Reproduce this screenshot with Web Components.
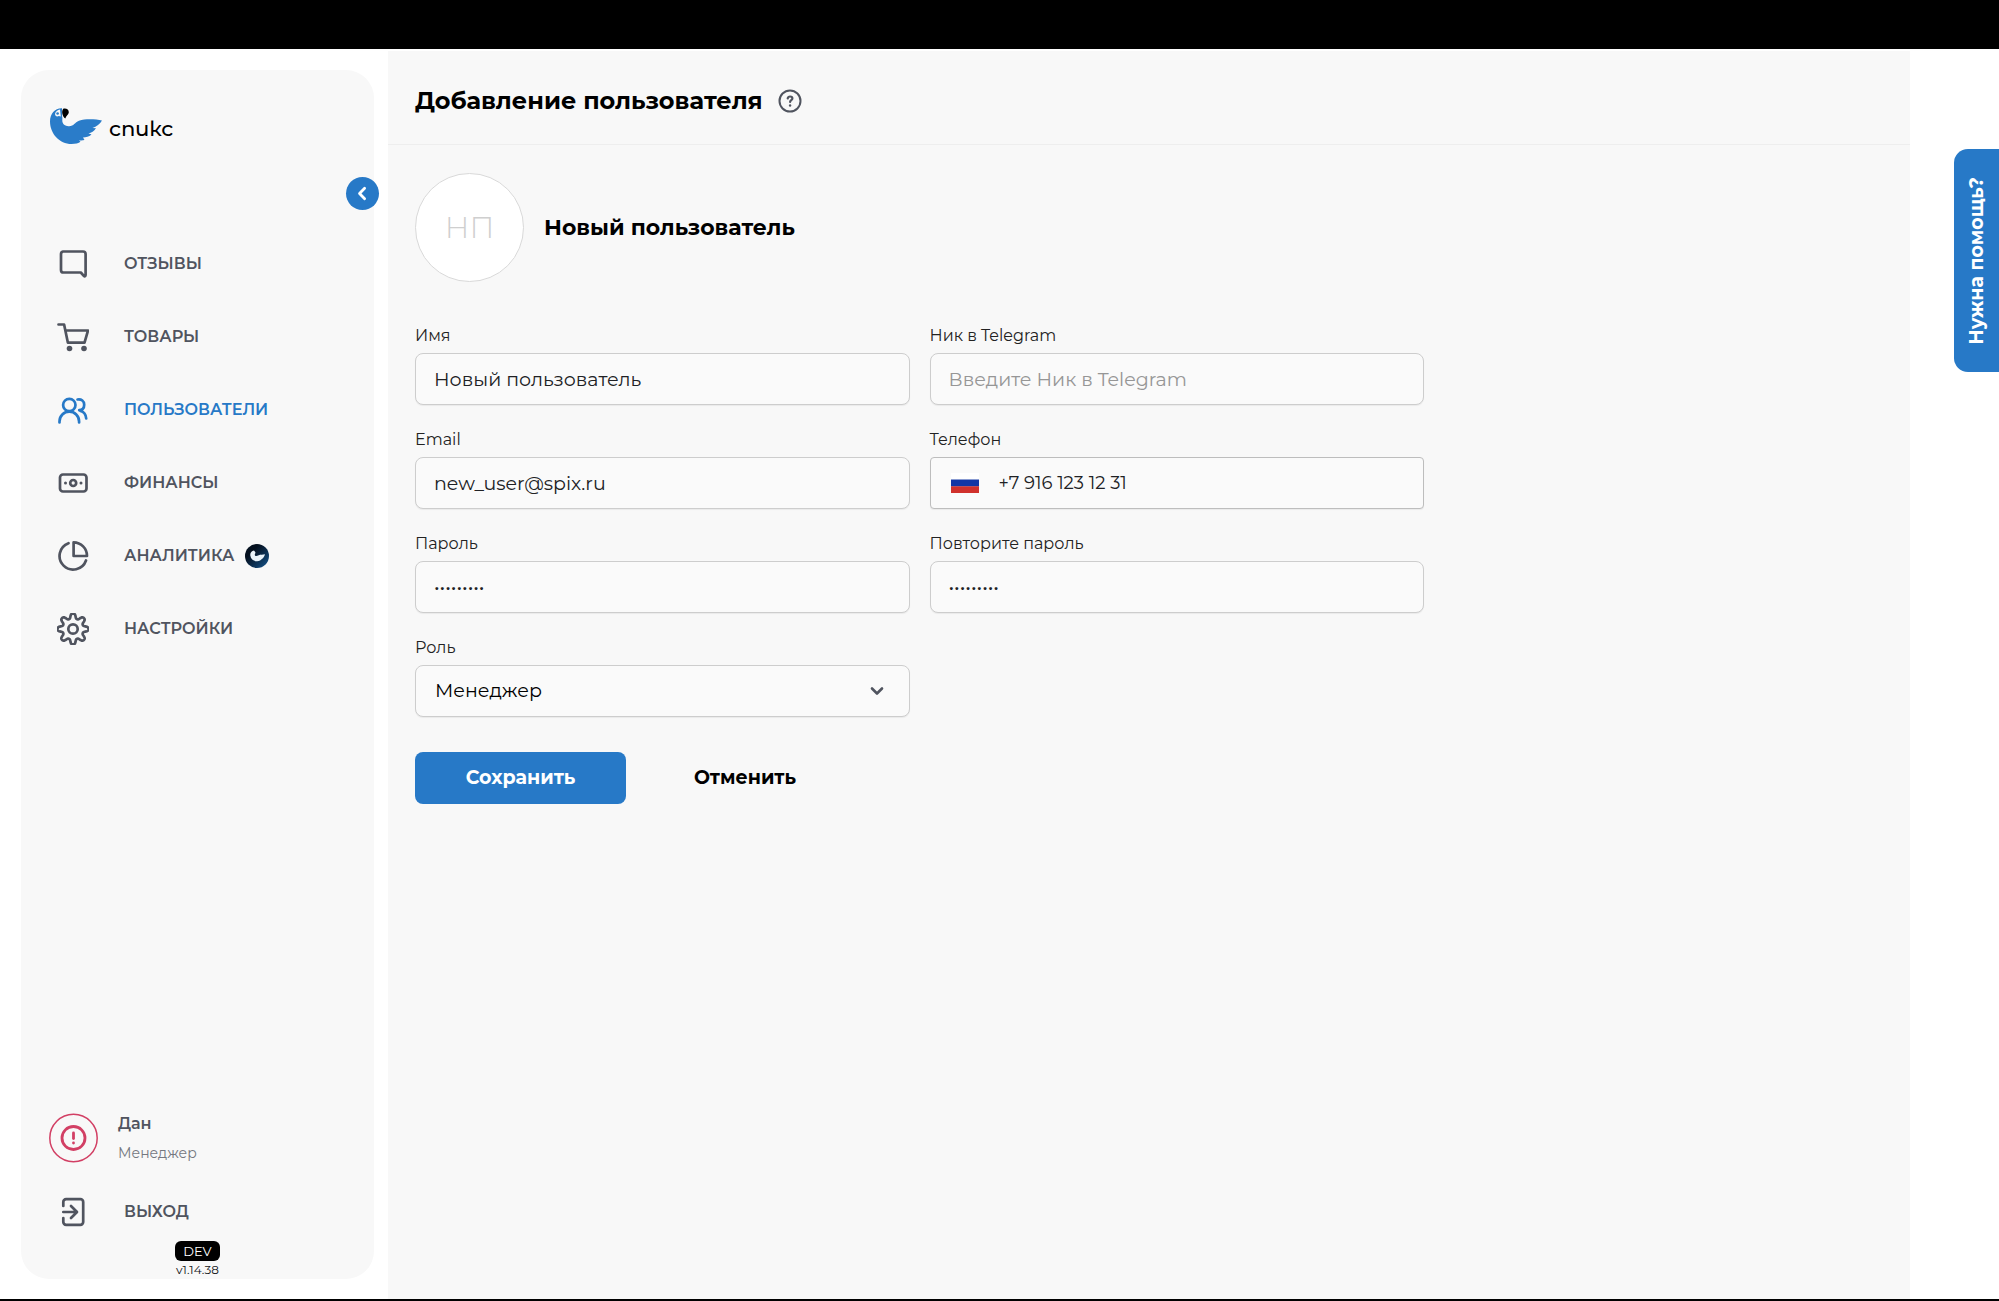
<!DOCTYPE html>
<html lang="ru">
<head>
<meta charset="utf-8">
<meta name="viewport" content="width=device-width, initial-scale=1">
<title>Добавление пользователя</title>
<style>
  :root {
    --blue: #2779c7;
    --ink: #111214;
    --grey: #50545f;
    --panel: #f8f8f8;
    --line: #cdcdcd;
  }
  body {
    margin: 0;
    font-family: Montserrat, Inter, "Noto Sans", sans-serif;
    color: var(--ink);
    background: #fff;
  }
</style>
</head>
<body>
<app-shell>
  <side-bar slot="side">
    <nav-item icon="reviews">ОТЗЫВЫ</nav-item>
    <nav-item icon="cart">ТОВАРЫ</nav-item>
    <nav-item icon="users" active>ПОЛЬЗОВАТЕЛИ</nav-item>
    <nav-item icon="money">ФИНАНСЫ</nav-item>
    <nav-item icon="pie">АНАЛИТИКА<bird-badge slot="after"></bird-badge></nav-item>
    <nav-item icon="gear">НАСТРОЙКИ</nav-item>
    <user-card slot="bottom" name="Дан" role-name="Менеджер"></user-card>
    <nav-item slot="bottom" icon="exit" compact>ВЫХОД</nav-item>
    <version-tag slot="bottom" stage="DEV">v1.14.38</version-tag>
  </side-bar>
  <page-header>Добавление пользователя</page-header>
  <user-form></user-form>
</app-shell>
<help-tab>Нужна помощь?</help-tab>

<script>
const gearPath = (() => {
  const points = [];
  for (let i = 0; i < 240; i++) {
    const a = i / 240 * Math.PI * 2;
    const r = 13 + 2.4 * Math.tanh(1.4 * Math.cos(8 * a)) / Math.tanh(1.4);
    points.push((16 + r * Math.sin(a)).toFixed(2) + ' ' + (16 - r * Math.cos(a)).toFixed(2));
  }
  return 'M' + points.join('L') + 'Z';
})();

const icons = {
  reviews: '<path d="M6 3.500h20a2.600 2.600 0 0 1 2.600 2.600v21c0 1.400-1 1.600-1.800.8l-3-3.400H6.500A2.600 2.600 0 0 1 4 21.900V6.100A2.600 2.600 0 0 1 6 3.500z"/>',
  cart: '<path d="M1.500 3.500h5.600l3.800 18.200H27.500L31 9.500H8.500"/><g fill="currentColor" stroke="none"><circle cx="12.500" cy="27.500" r="2.800"/><circle cx="27" cy="27.500" r="2.800"/></g>',
  users: '<circle cx="12.300" cy="11" r="6.200"/><path d="M2.500 28.500v-1a9.800 9.800 0 0 1 19.600 0v1M20.500 5.500c4-.6 6.700 1.500 6.700 5.200 0 3-1.800 5.200-5 5.500M23.500 17c3.300.8 5.400 3.500 5.700 7.500"/>',
  money: '<rect x="3" y="7.500" width="26.500" height="17" rx="3"/><circle cx="16.200" cy="16" r="3"/><g fill="currentColor" stroke="none"><circle cx="8.500" cy="16" r="1.500"/><circle cx="24" cy="16" r="1.500"/></g>',
  pie: '<path d="M11.500 3.200A13.600 13.600 0 1 0 29 20.500M16.600 2.400A13.500 13.500 0 0 1 30 16H16.600z"/>',
  gear: '<circle cx="16" cy="16" r="4.700"/><path d="' + gearPath + '"/>',
  exit: '<path d="M6.300 10V6a2.800 2.800 0 0 1 2.800-2.800h14.300A2.800 2.800 0 0 1 26.200 6v20a2.800 2.800 0 0 1-2.800 2.800H9.100A2.800 2.800 0 0 1 6.300 26v-4M6.300 16h13M14 10l6 6-6 6"/>'
};
const icon = name => `<svg width="32" height="32" viewBox="0 0 32 32" fill="none" stroke="currentColor" stroke-width="2.700" stroke-linecap="round" stroke-linejoin="round" aria-hidden="true">${icons[name]}</svg>`;

const birdBody = 'M12 .3C5 0 0 6 0 13.500 0 25.500 9.500 36 21.500 36c4 0 7-.8 9-2.200l-1.500-1.500c2 .3 4 .2 5.500-.3l-1.500-2.500c3 0 6-.8 8.500-3l-3-1.200c3-.5 5.500-2 7.500-5l-3.500-.3c4-1.500 7.500-3.800 9.500-7.500-6-1.200-16-2-23 .2-4.500 1.500-5 5.800-10.500 5.500C15 18 12.500 16 12.300 13c0-2 .3-3-.3-5z';

const base = '<style>*{box-sizing:border-box}button,input,select{font-family:inherit;color:inherit;margin:0}svg{display:block;flex:none}</style>';
function define(name, render) {
  customElements.define(name, class extends HTMLElement {
    constructor() { super(); this.attachShadow({ mode: 'open' }); }
    connectedCallback() { this.shadowRoot.innerHTML = base + render(this); }
  });
}

define('app-shell', () => `
<style>
  :host { display: flex; flex-direction: column; min-height: 100vh; border-top: 49px solid #000; border-bottom: 2px solid #000; box-sizing: border-box; }
  .row { flex: 1; display: flex; padding-right: 89px; gap: 14px; }
  aside { display: flex; flex: none; width: 374px; padding: 21px 0 20px 21px; }
  main { flex: 1; min-width: 0; margin-top: 2px; background: var(--panel); }
</style>
<div class="row">
  <aside><slot name="side"></slot></aside>
  <main><slot></slot></main>
</div>`);

define('side-bar', () => `
<style>
  :host { position: relative; flex: 1; display: flex; flex-direction: column; background: var(--panel); border-radius: 28px; padding: 38px 29px 0; box-sizing: border-box; }
  nav { display: flex; flex-direction: column; margin-top: 83px; }
  .bottom { display: flex; flex-direction: column; margin-top: auto; }
  button { position: absolute; right: -5px; top: 107px; width: 33px; height: 33px; border: 0; border-radius: 50%; padding: 0; display: grid; place-items: center; background: var(--blue); color: #fff; }
</style>
<brand-logo></brand-logo>
<button type="button" aria-label="Свернуть меню">
  <svg width="17" height="17" viewBox="0 0 16 16" fill="none" stroke="currentColor" stroke-width="2.600" stroke-linecap="round" stroke-linejoin="round"><path d="M10 3 5.200 8l4.800 5"/></svg>
</button>
<nav><slot></slot></nav>
<div class="bottom"><slot name="bottom"></slot></div>`);

define('brand-logo', () => `
<style>
  :host { display: block; }
  a { display: flex; align-items: center; gap: 7px; height: 36px; color: #000; text-decoration: none; font-size: 21px; line-height: 28px; font-weight: 500; }
  span { padding-top: 6px; }
</style>
<a href="#">
  <svg width="52" height="36" viewBox="0 0 52 36" aria-hidden="true">
    <path fill="#2a7cc9" d="${birdBody}"/>
    <path fill="#f8f8f8" d="M5 6c.5-2.500 2.500-4 5-4.500l.8 7-2-.5c-1.500 1-3.500.5-3.800-2z"/>
    <circle cx="7.600" cy="5.500" r="1.300" fill="#2a7cc9"/>
    <path fill="#000" d="M13.200.8c3-.8 5.800.8 5.600 3.600-.2 2.300-2.800 3.200-3.500 6-2.700-1.500-4.300-6.600-2.100-9.600z"/>
  </svg>
  <span lang="bg">спикс</span>
</a>`);

define('bird-badge', () => `
<style>:host { display: block; }</style>
<svg width="24" height="24" viewBox="0 0 24 24" aria-hidden="true">
  <defs><linearGradient id="g" x1="0" y1="0" x2="1" y2="1"><stop offset="0.300" stop-color="#04101f"/><stop offset="1" stop-color="#16568f"/></linearGradient></defs>
  <circle cx="12" cy="12" r="12" fill="url(#g)"/>
  <path fill="#e9f3fa" d="M9 6.500C6.500 7 5 9 5.300 11.500 5.800 15 8.500 17.300 12 17.200c2.500-.1 4-1 4.800-2.200 1.700-.9 2.600-2.700 3.200-4.800-2 .7-4.500.2-6.300 1-1.500.7-2.900 1.300-3.700.2-.7-1.100.6-1.800.4-3.200z"/>
</svg>`);

define('nav-item', el => `
<style>
  :host { display: block; }
  a { display: flex; align-items: center; height: 73px; padding-left: 7px; color: var(--grey); text-decoration: none; font-size: 16px; line-height: 24px; font-weight: 600; }
  :host([active]) a { color: var(--blue); }
  :host([compact]) a { height: 48px; }
  span { margin: 0 11px 0 35px; }
</style>
<a href="#" ${el.hasAttribute('active') ? 'aria-current="page"' : ''}>${icon(el.getAttribute('icon'))}<span><slot></slot></span><slot name="after"></slot></a>`);

define('user-card', el => `
<style>
  :host { display: flex; align-items: center; gap: 19px; height: 50px; margin-bottom: 25px; }
  svg { margin-left: -1px; }
  div { display: flex; flex-direction: column; gap: 9px; color: var(--grey); }
  b { font-size: 16px; line-height: 20px; font-weight: 600; }
  small { font-size: 14px; line-height: 20px; color: #74777f; }
</style>
<svg width="50" height="50" viewBox="0 0 50 50" fill="none" stroke="#d23f64" stroke-linecap="round" aria-hidden="true">
  <circle cx="24.500" cy="25" r="23.700" stroke-width="1.500"/><circle cx="24.500" cy="25" r="11.500" stroke-width="2.800"/>
  <path d="M24.500 20v5.500" stroke-width="2.800"/><path d="M24.500 30v.1" stroke-width="2.800"/>
</svg>
<div><b>${el.getAttribute('name')}</b><small>${el.getAttribute('role-name')}</small></div>`);

define('version-tag', el => `
<style>
  :host { display: flex; flex-direction: column; align-items: center; margin-top: 5px; font-size: 12px; line-height: 18px; }
  span { padding: 0 8px; background: #000; color: #fff; border-radius: 6px; font-size: 13px; line-height: 20px; }
</style>
<span>${el.getAttribute('stage')}</span><div><slot></slot></div>`);

define('page-header', () => `
<style>
  :host { display: flex; align-items: center; gap: 15px; height: 94px; padding: 7px 27px 0; border-bottom: 1px solid #eee; box-sizing: border-box; }
  h1 { margin: 0; font-size: 24px; line-height: 32px; font-weight: 700; color: #000; }
  button { padding: 0; border: 0; background: none; color: var(--grey); }
</style>
<h1><slot></slot></h1>
<button type="button" aria-label="Справка">
  <svg width="24" height="24" viewBox="0 0 24 24" fill="none" stroke="currentColor" stroke-width="2" stroke-linecap="round" stroke-linejoin="round"><circle cx="12" cy="12" r="10.500"/><path d="M9.700 9.400c.3-1.300 1.200-1.900 2.400-1.900 1.400 0 2.300.8 2.300 2 0 1.600-2.300 1.700-2.300 3.500" stroke-width="2.200"/><path d="M12.100 16.500v.1" stroke-width="2.400"/></svg>
</button>`);

define('form-field', el => {
  const kind = el.getAttribute('kind') || 'text';
  const value = el.getAttribute('value') || '';
  let control;
  if (kind === 'select') {
    control = `<select id="c"><option>${value}</option></select>
    <svg class="chev" width="16" height="16" viewBox="0 0 16 16" fill="none" stroke="#50545f" stroke-width="2.600" stroke-linecap="round" stroke-linejoin="round" aria-hidden="true"><path d="M3 5.500 8 10.500l5-5"/></svg>`;
  } else {
    const flag = kind === 'tel' ? `<svg width="28" height="20" viewBox="0 0 28 20" role="img" aria-label="Россия"><path fill="#fff" d="M0 0h28v7H0z"/><path fill="#1236a5" d="M0 6.500h28v7H0z"/><path fill="#d0312c" d="M0 13.300h28V20H0z"/></svg>` : '';
    control = `${flag}<input id="c" type="${kind}" value="${value}" placeholder="${el.getAttribute('placeholder') || ''}" autocomplete="off">`;
  }
  return `
<style>
  :host { display: flex; flex-direction: column; gap: 6px; min-width: 0; }
  label { font-size: 16px; line-height: 22px; color: #222; }
  .box { display: flex; align-items: center; height: 52px; border: 1px solid var(--line); border-radius: 8px; background: #fafafa; box-shadow: 0 1px 1px rgba(0,0,0,.06); }
  input, select { flex: 1; min-width: 0; height: 100%; border: 0; outline: 0; background: none; padding: 0 18px; font-size: 19px; line-height: 28px; color: #202124; }
  input::placeholder { color: #969696; opacity: 1; }
  select { appearance: none; padding: 0 19px; color: #000; }
  .select { display: grid; align-items: center; }
  .select > * { grid-area: 1 / 1; }
  .select select { width: 100%; }
  .chev { justify-self: end; margin-right: 24px; pointer-events: none; }
  .tel { border-radius: 4px; border-color: #bdbdbd; padding-left: 20px; }
  .tel input { font-size: 18px; padding-left: 20px; }
</style>
<label for="c">${el.getAttribute('label')}</label>
<div class="box ${kind}">${control}</div>`;
});

define('user-form', () => `
<style>
  :host { display: block; padding: 28px 27px; }
  .who { display: flex; align-items: center; gap: 20px; }
  .avatar { display: grid; place-items: center; width: 109px; height: 109px; border-radius: 50%; border: 1px solid #d9d9d9; background: #fff; color: #cfcfcf; font-size: 30px; line-height: 40px; font-weight: 300; }
  h2 { margin: 0; font-size: 22px; line-height: 30px; font-weight: 700; color: #000; }
  .grid { display: grid; grid-template-columns: 1fr 1fr; gap: 24px 20px; max-width: 1009px; margin-top: 43px; }
  .actions { display: flex; align-items: center; gap: 27px; margin-top: 35px; }
  button { width: 184px; height: 52px; border: 0; border-radius: 8px; padding: 0; background: none; color: #000; font-size: 19px; line-height: 28px; font-weight: 700; }
  button.primary { width: 211px; background: var(--blue); color: #fff; }
</style>
<form>
  <div class="who"><div class="avatar">НП</div><h2>Новый пользователь</h2></div>
  <div class="grid">
    <form-field label="Имя" value="Новый пользователь"></form-field>
    <form-field label="Ник в Telegram" placeholder="Введите Ник в Telegram"></form-field>
    <form-field label="Email" value="new_user@spix.ru" kind="email"></form-field>
    <form-field label="Телефон" kind="tel" value="+7 916 123 12 31"></form-field>
    <form-field label="Пароль" kind="password" value="password1"></form-field>
    <form-field label="Повторите пароль" kind="password" value="password1"></form-field>
    <form-field label="Роль" kind="select" value="Менеджер"></form-field>
  </div>
  <div class="actions"><button class="primary" type="submit">Сохранить</button><button type="reset">Отменить</button></div>
</form>`);

define('help-tab', () => `
<style>
  :host { position: fixed; right: 0; top: 149px; display: block; }
  button { display: grid; place-items: center; width: 45px; height: 223px; border: 0; padding: 0; border-radius: 14px 0 0 14px; background: var(--blue); color: #fff; font-size: 19px; line-height: 28px; font-weight: 700; }
  span { writing-mode: vertical-rl; rotate: 180deg; }
</style>
<button type="button"><span><slot></slot></span></button>`);
</script>
</body>
</html>
